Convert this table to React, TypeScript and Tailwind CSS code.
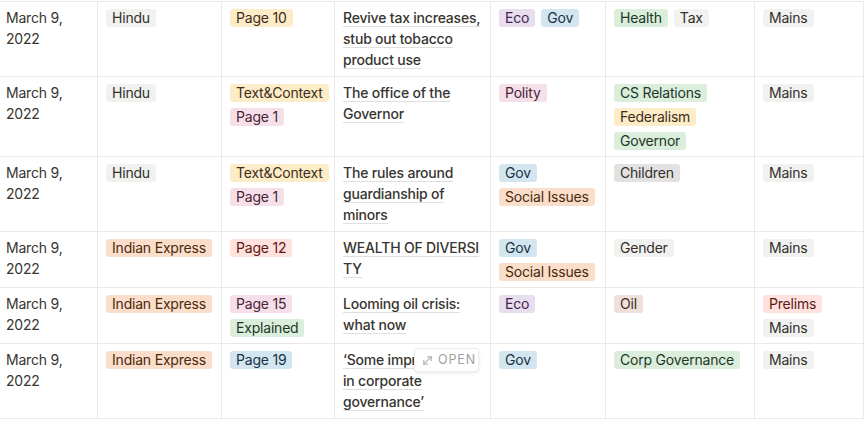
import React from 'react'

type Color = 'default' | 'gray' | 'brown' | 'orange' | 'yellow' | 'green' | 'blue' | 'purple' | 'pink' | 'red'

interface Tag {
  label: string
  color: Color
}

interface Row {
  date: string
  source: Tag[]
  page: Tag[]
  title: string
  subject: Tag[]
  topics: Tag[]
  exam: Tag[]
}

const tagColors: Record<Color, string> = {
  default: 'bg-[#f1f1ef] text-[#32302c]',
  gray: 'bg-[#e3e2e0] text-[#32302c]',
  brown: 'bg-[#eee0da] text-[#442a1e]',
  orange: 'bg-[#fadec9] text-[#49290e]',
  yellow: 'bg-[#fdecc8] text-[#402c1b]',
  green: 'bg-[#dbeddb] text-[#1c3829]',
  blue: 'bg-[#d3e5ef] text-[#183347]',
  purple: 'bg-[#e8deee] text-[#412454]',
  pink: 'bg-[#f5e0e9] text-[#4c2337]',
  red: 'bg-[#ffe2dd] text-[#5d1715]',
}

const hindu: Tag = { label: 'Hindu', color: 'default' }
const express: Tag = { label: 'Indian Express', color: 'orange' }
const mains: Tag = { label: 'Mains', color: 'default' }
const gov: Tag = { label: 'Gov', color: 'blue' }
const eco: Tag = { label: 'Eco', color: 'purple' }
const social: Tag = { label: 'Social Issues', color: 'orange' }

const rows: Row[] = [
  {
    date: 'March 9, 2022',
    source: [hindu],
    page: [{ label: 'Page 10', color: 'yellow' }],
    title: 'Revive tax increases, stub out tobacco product use',
    subject: [eco, gov],
    topics: [{ label: 'Health', color: 'green' }, { label: 'Tax', color: 'default' }],
    exam: [mains],
  },
  {
    date: 'March 9, 2022',
    source: [hindu],
    page: [{ label: 'Text&Context', color: 'yellow' }, { label: 'Page 1', color: 'pink' }],
    title: 'The office of the Governor',
    subject: [{ label: 'Polity', color: 'pink' }],
    topics: [
      { label: 'CS Relations', color: 'green' },
      { label: 'Federalism', color: 'yellow' },
      { label: 'Governor', color: 'green' },
    ],
    exam: [mains],
  },
  {
    date: 'March 9, 2022',
    source: [hindu],
    page: [{ label: 'Text&Context', color: 'yellow' }, { label: 'Page 1', color: 'pink' }],
    title: 'The rules around guardianship of minors',
    subject: [gov, social],
    topics: [{ label: 'Children', color: 'gray' }],
    exam: [mains],
  },
  {
    date: 'March 9, 2022',
    source: [express],
    page: [{ label: 'Page 12', color: 'red' }],
    title: 'WEALTH\u00a0OF\u00a0DIVERSI\u200bTY',
    subject: [gov, social],
    topics: [{ label: 'Gender', color: 'default' }],
    exam: [mains],
  },
  {
    date: 'March 9, 2022',
    source: [express],
    page: [{ label: 'Page 15', color: 'pink' }, { label: 'Explained', color: 'green' }],
    title: 'Looming oil crisis: what now',
    subject: [eco],
    topics: [{ label: 'Oil', color: 'brown' }],
    exam: [{ label: 'Prelims', color: 'red' }, mains],
  },
  {
    date: 'March 9, 2022',
    source: [express],
    page: [{ label: 'Page 19', color: 'blue' }],
    title: '‘Some improvement in corporate governance’',
    subject: [gov],
    topics: [{ label: 'Corp Governance', color: 'green' }],
    exam: [mains],
  },
]

function TagCell({ tags, width }: { tags: Tag[]; width: string }) {
  return (
    <div className={`${width} shrink-0 border-r border-[#e9e9e7] pl-[8px] pr-[8px] pt-[7px] pb-[6px]`}>
      <div className="flex flex-wrap gap-[6px]">
        {tags.map((tag, i) => (
          <span
            key={i}
            className={`h-[18px] px-[6px] rounded-[3px] text-[14px] leading-[18px] whitespace-nowrap ${tagColors[tag.color]}`}
          >
            {tag.label}
          </span>
        ))}
      </div>
    </div>
  )
}

export default function App() {
  return (
    <div
      className="relative w-[865px] h-[421px] overflow-hidden bg-white pt-px text-[#37352f] tracking-[-0.2px]"
      style={{ fontFamily: 'Inter, "Noto Sans", sans-serif' }}
    >
      <div className="w-[864px] border-t border-[#e9e9e7]">
        {rows.map((row, idx) => (
          <div key={idx} className="flex border-b border-[#e9e9e7]">
            <div className="w-[98px] shrink-0 border-r border-[#e9e9e7] pl-[6px] pr-[8px] pt-[5px] pb-[6px] text-[14px] leading-[21px]">
              {row.date}
            </div>
            <TagCell tags={row.source} width="w-[124px]" />
            <TagCell tags={row.page} width="w-[113px]" />
            <div className="w-[156px] shrink-0 border-r border-[#e9e9e7] pl-[8px] pr-[6px] pt-[5px] pb-[6px] text-[14px] leading-[21px] font-medium">
              <span className="border-b border-[rgba(55,53,47,0.16)]">{row.title}</span>
            </div>
            <TagCell tags={row.subject} width="w-[115px]" />
            <TagCell tags={row.topics} width="w-[149px]" />
            <TagCell tags={row.exam} width="w-[109px]" />
          </div>
        ))}
      </div>

      {/* Open button over hovered row */}
      <div className="absolute left-[414px] top-[348px] h-[24px] w-[65px] flex items-center gap-[5px] pl-[7px] rounded-[4px] bg-white border border-[rgba(55,53,47,0.09)] shadow-[0_1px_3px_rgba(15,15,15,0.1)]">
        <svg width="11" height="11" viewBox="0 0 12 12" fill="none" stroke="#b5b4b1" strokeWidth="1.4" strokeLinecap="round" strokeLinejoin="round">
          <path d="M2 10 L10 2" />
          <path d="M6 2 H10 V6" />
          <path d="M2 6 V10 H6" />
        </svg>
        <span className="text-[12.5px] leading-none tracking-[0.07em] text-[#a09f9c]">OPEN</span>
      </div>
    </div>
  )
}
